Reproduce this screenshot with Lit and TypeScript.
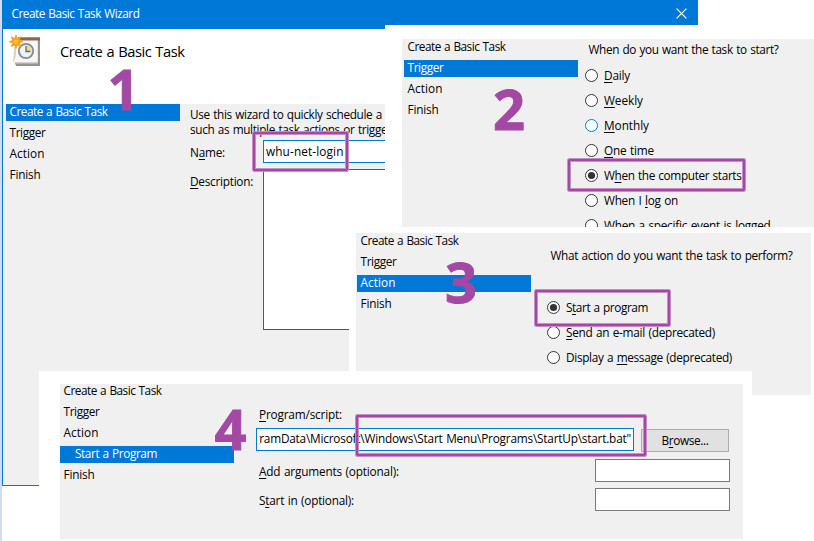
import { LitElement, html, css, svg } from "lit";
import { customElement, property } from "lit/decorators.js";

/** A line of text set to a given width; "_" precedes the access-key letter. */
@customElement("fit-text")
class FitText extends LitElement {
  @property() text = "";
  @property({ type: Number }) w = 0;
  static styles = css`
    :host { display: block; white-space: pre; line-height: 17px; width: max-content; flex: none; word-spacing: 0.7px; }
    .key { text-decoration: underline; text-decoration-thickness: 1px; text-underline-offset: 2px; }
  `;
  firstUpdated() {
    this.fit();
    document.fonts.ready.then(() => this.fit());
  }
  fit() {
    const t = this.renderRoot.querySelector(".t") as HTMLElement;
    t.style.letterSpacing = "0px";
    const n = this.text.replace("_", "").length;
    const natural = t.getBoundingClientRect().width;
    t.style.letterSpacing = (this.w - natural) / n + "px";
  }
  render() {
    const i = this.text.indexOf("_");
    const body = i < 0 ? this.text
      : html`${this.text.slice(0, i)}<span class="key">${this.text[i + 1]}</span>${this.text.slice(i + 2)}`;
    return html`<span class="t">${body}</span>`;
  }
}

type Row = [string, number];
const NAV: Row[] = [["Create a Basic Task", 98], ["Trigger", 36], ["Action", 35], ["Finish", 31]];

@customElement("step-nav")
class StepNav extends LitElement {
  @property({ type: Number }) active = 0;
  @property({ attribute: false }) rows: Row[] = NAV;
  static styles = css`
    :host { display: flex; flex-direction: column; gap: 4px; width: 174px; flex: none; }
    .row { height: 17px; padding-left: 3.5px; display: flex; }
    .row fit-text { line-height: 15px; }
    .on { background: #0078d7; color: #fff; }
    .sub { padding-left: 15px; }
  `;
  render() {
    return this.rows.map(([t, w], i) => html`
      <div class="row ${i === this.active ? "on" : ""} ${t === "Start a Program" ? "sub" : ""}">
        <fit-text .text=${t} .w=${w}></fit-text>
      </div>`);
  }
}

@customElement("radio-list")
class RadioList extends LitElement {
  @property({ attribute: false }) rows: Row[] = [];
  @property({ type: Number }) checked = 0;
  @property({ type: Number }) hot = -1;
  static styles = css`
    :host { display: flex; flex-direction: column; }
    .row { height: 25px; display: flex; align-items: center; gap: 6px; flex: none; }
    svg { flex: none; }
  `;
  render() {
    return this.rows.map(([t, w], i) => html`
      <div class="row">
        <svg width="13" height="13" viewBox="0 0 13 13">
          <circle cx="6.5" cy="6.5" r="6" fill="#fff" stroke=${i === this.hot ? "#0078d7" : "#333"} />
          ${i === this.checked ? svg`<circle cx="6.5" cy="6.5" r="3.6" fill="#333" />` : ""}
        </svg>
        <fit-text .text=${t} .w=${w}></fit-text>
      </div>`);
  }
}

@customElement("app-root")
class AppRoot extends LitElement {
  static styles = css`
    :host {
      display: block; position: relative; width: 814px; height: 541px; overflow: hidden;
      background: #fff; color: #000; font-family: "Open Sans", "Noto Sans", sans-serif; font-size: 11.8px;
    }
    * { box-sizing: border-box; }
    .edge { position: absolute; left: 0; top: 0; width: 2px; height: 541px; background: #d2dcec; }
    .win { position: absolute; overflow: hidden; display: flex; }
    .w1 { left: 2px; top: 0; width: 696px; height: 486px; flex-direction: column; background: #f0f0f0;
      border: solid #0078d7; border-width: 0 1px 1px; }
    .title { height: 29px; flex: none; background: #0078d7; color: #fff; display: flex; justify-content: space-between;
      padding: 5px 10px 0 8.5px; }
    .close { margin-top: 3px; }
    .head { height: 75px; flex: none; background: #fff; display: flex; padding: 5px 0 0 5px; gap: 16px; }
    .big { font-size: 14.7px; margin-top: 9px; }
    .body { flex: 1; display: flex; padding-left: 3px; gap: 10px; min-height: 0; }
    .form { flex: 1; padding-top: 2px; display: flex; flex-direction: column; }
    .form .line { height: 15px; }
    .field { display: flex; }
    .field.name { margin-top: 4px; }
    .field.desc { margin-top: 6px; }
    .lab { width: 73px; padding-top: 4px; flex: none; }
    .input { height: 23px; background: #fff; border: 1px solid #0078d7; padding: 2px 2px; flex: 1; display: flex; }
    .area { height: 161px; background: #fff; border: 1px solid #555; flex: 1; }
    .w2 { left: 385px; top: 25px; width: 429px; height: 204px; background: #fff; padding: 14px 0 2px 17px; }
    .w3 { left: 349px; top: 227px; width: 465px; height: 168px; background: #fff; padding: 6px 3px 0 7px; }
    .w4 { left: 39px; top: 371px; width: 713px; height: 170px; background: #fff; padding: 13px 9px 2px 21px; }
    .panel { flex: 1; display: flex; background: #f0f0f0; overflow: hidden; min-width: 0; }
    .w2 .panel { padding-left: 2px; gap: 7px; }
    .w3 .panel { padding-left: 1px; gap: 16px; }
    .w4 .panel { gap: 22px; }
    .w4 step-nav { margin-top: -1px; }
    .col { display: flex; flex-direction: column; }
    .w2 .q { padding: 2px 0 5px 3.5px; }
    .w3 .q { padding: 14px 0 31px 3.5px; }
    .w4 .col { padding-top: 22px; width: 474px; }
    .w4 .col > fit-text { margin-left: 3px; }
    .prog { display: flex; gap: 7px; margin-top: 5px; }
    .prog .input { flex: none; width: 378px; padding: 1px 2px; }
    .clip { flex: 1; display: flex; justify-content: flex-end; overflow: hidden; }
    .btn { width: 88px; height: 23px; margin-top: 1px; background: #e1e1e1; border: 1px solid #adadad; display: flex;
      justify-content: center; padding-top: 2px; }
    .opt { display: flex; justify-content: space-between; padding-left: 3px; height: 23px; }
    .opt fit-text { margin-top: 4px; }
    .opt.a { margin-top: 7px; }
    .opt.b { margin-top: 6px; }
    .box { width: 135px; height: 23px; background: #fff; border: 1px solid #7a7a7a; }
    .mark { position: absolute; border: 2px solid #a349a4; outline: 1px solid #c78fc8; box-shadow: inset 0 0 0 1px #c78fc8; border-radius: 1px; }
    .m1 { left: 253px; top: 132px; width: 95px; height: 39px; }
    .m2 { left: 568px; top: 159px; width: 177px; height: 32px; }
    .m3 { left: 535px; top: 290px; width: 135px; height: 36px; }
    .m4 { left: 356px; top: 415px; width: 290px; height: 41px; }
    .num { position: absolute; font-weight: 700; font-size: 56px; line-height: 42px; color: #a349a4; -webkit-text-stroke: 0.9px #a349a4; }
    .n1 { left: 107.5px; top: 67px; }
    .n2 { left: 493px; top: 87px; }
    .n3 { left: 445px; top: 260px; }
    .n4 { left: 214.5px; top: 406.500px; }
  `;
  render() {
    return html`
      <div class="edge"></div>
      <section class="win w1">
        <div class="title">
          <fit-text .text=${"Create Basic Task Wizard"} .w=${128}></fit-text>
          <svg class="close" width="11" height="11" viewBox="0 0 11 11"><path d="M.6.6l9.8 9.8M10.4.6L.6 10.400" stroke="#fff" stroke-width="1.1" /></svg>
        </div>
        <div class="head">
          <svg width="36" height="34" viewBox="0 0 36 34">
            <path d="M8 5h24v27H8l-1-3z" fill="#98938d" />
            <path d="M7 5h23v24.500H8l-3-2z" fill="#d5d2ce" />
            <path d="M8 6h21.500v21.500l-3 .5H5.500c1.500-3 2.500-6 2.500-10z" fill="#f8f7f5" />
            <path d="M10 3h22v3.500H10z" fill="#94604f" />
            <path d="M11 3h21v1H11z" fill="#b58778" />
            <circle cx="18" cy="17" r="7.2" fill="#dde9f3" stroke="#858a90" stroke-width="1.800" />
            <circle cx="18" cy="17" r="5.600" fill="#edf3f8" />
            <path d="M18 11.400v5.600h5.600a5.600 5.600 0 0 0-5.600-5.600z" fill="#f5d68c" />
            <path d="M18 12v5.500h4.500" fill="none" stroke="#5b6d80" stroke-width="1.300" />
            <path d="M8 .8l1.300 3.600 3.500-1.700-1.500 3.600 3.600 1.400-3.600 1.400 1.500 3.600-3.500-1.700L8 14.600 6.700 11l-3.500 1.700 1.500-3.600L1.100 7.700l3.600-1.400-1.500-3.600 3.500 1.700z" fill="#f59f10" stroke="#f5a623" stroke-width=".8" />
            <circle cx="8" cy="7.700" r="2.300" fill="#ffc23c" />
          </svg>
          <fit-text class="big" .text=${"Create a Basic Task"} .w=${124.5}></fit-text>
        </div>
        <div class="body">
          <step-nav .active=${0}></step-nav>
          <div class="form">
            <fit-text class="line" .text=${"Use this wizard to quickly schedule a"} .w=${192}></fit-text>
            <fit-text class="line" .text=${"such as multiple task actions or triggers"} .w=${207}></fit-text>
            <div class="field name">
              <div class="lab"><fit-text .text=${"N_ame:"} .w=${35}></fit-text></div>
              <div class="input"><fit-text .text=${"whu-net-login"} .w=${77.5}></fit-text></div>
            </div>
            <div class="field desc">
              <div class="lab"><fit-text .text=${"_Description:"} .w=${63}></fit-text></div>
              <div class="area"></div>
            </div>
          </div>
        </div>
      </section>

      <section class="win w2">
        <div class="panel">
          <step-nav .active=${1}></step-nav>
          <div class="col">
            <fit-text class="q" .text=${"When do you want the task to start?"} .w=${190}></fit-text>
            <radio-list .checked=${4} .hot=${2} .rows=${[
              ["_Daily", 26], ["_Weekly", 39], ["_Monthly", 45], ["_One time", 50],
              ["W_hen the computer starts", 137.5], ["When I _log on", 74], ["When a specific event is logged", 166.5],
            ] as Row[]}></radio-list>
          </div>
        </div>
      </section>

      <section class="win w3">
        <div class="panel">
          <step-nav .active=${2}></step-nav>
          <div class="col">
            <fit-text class="q" .text=${"What action do you want the task to perform?"} .w=${242}></fit-text>
            <radio-list .rows=${[
              ["S_tart a program", 82], ["_Send an e-mail (deprecated)", 149], ["Display a _message (deprecated)", 166],
            ] as Row[]}></radio-list>
          </div>
        </div>
      </section>

      <section class="win w4">
        <div class="panel">
          <step-nav .active=${3} .rows=${[...NAV.slice(0, 3), ["Start a Program", 82], NAV[3]] as Row[]}></step-nav>
          <div class="col">
            <fit-text .text=${"_Program/script:"} .w=${83}></fit-text>
            <div class="prog">
              <div class="input"><div class="clip"><fit-text .text=${"gramData\\Microsoft\\Windows\\Start Menu\\Programs\\StartUp\\start.bat\""} .w=${378}></fit-text></div></div>
              <div class="btn"><fit-text .text=${"B_rowse..."} .w=${47}></fit-text></div>
            </div>
            <div class="opt a"><fit-text .text=${"_Add arguments (optional):"} .w=${140}></fit-text><div class="box"></div></div>
            <div class="opt b"><fit-text .text=${"S_tart in (optional):"} .w=${95}></fit-text><div class="box"></div></div>
          </div>
        </div>
      </section>

      <div class="mark m1"></div><div class="mark m2"></div><div class="mark m3"></div><div class="mark m4"></div>
      <div class="num n1">1</div><div class="num n2">2</div><div class="num n3">3</div><div class="num n4">4</div>
    `;
  }
}
